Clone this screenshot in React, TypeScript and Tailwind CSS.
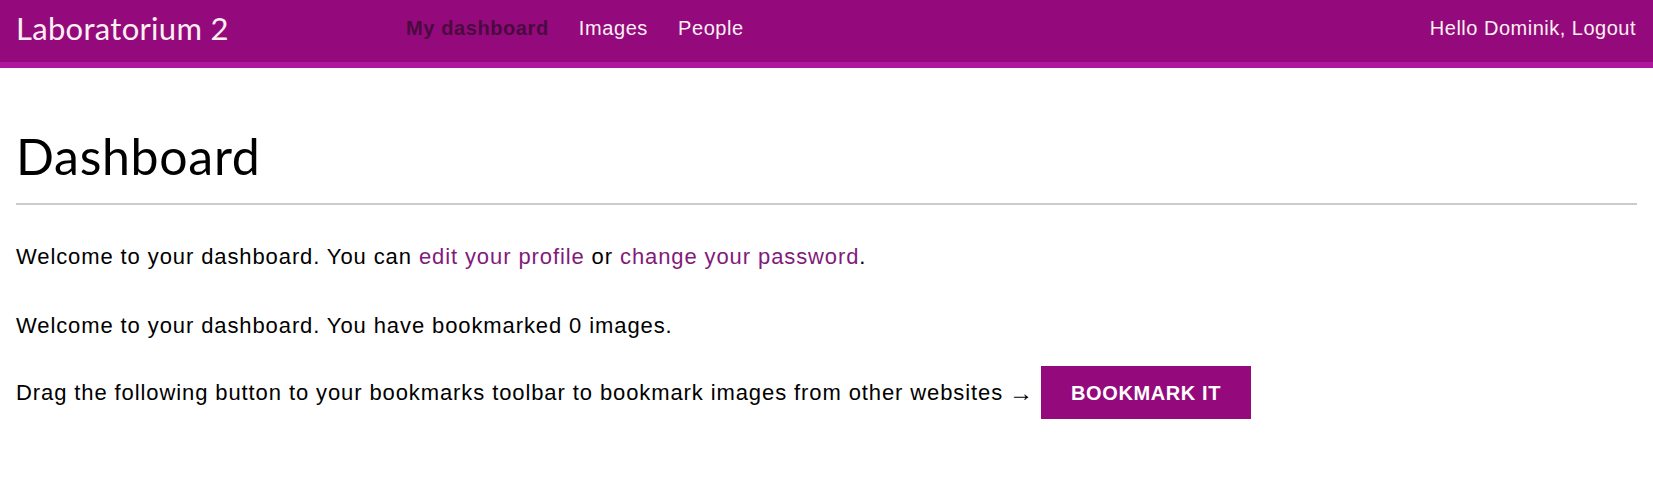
import React from 'react'

// ── Header ─────────────────────────────────────────────────────────
function Header() {
  return (
    <header className="bg-[#940a7c] border-b-[6px] border-[#b0169e] h-[68px] flex items-center px-4">
      <div className="w-[390px] text-[31px] text-[#fdf0f0] font-['Lato',sans-serif] tracking-[0.3px] -mt-[6px]">
        Laboratorium 2
      </div>
      <nav className="flex items-center gap-[30px] font-['Liberation_Sans',Arial,sans-serif] text-[20px] tracking-[0.6px] -mt-[6px]">
        <a className="font-bold text-[#4a0a40]">My dashboard</a>
        <a className="text-[#fdf0f5]">Images</a>
        <a className="text-[#fdf0f5]">People</a>
      </nav>
      <div className="ml-auto text-[20px] tracking-[0.5px] text-[#fdf0f0] font-['Liberation_Sans',Arial,sans-serif] -mt-[6px] pr-[1px]">
        Hello Dominik, <a>Logout</a>
      </div>
    </header>
  )
}

export default function App() {
  return (
    <div className="bg-white min-h-[487px]">
      <Header />
      <main className="px-4 pt-[58px] font-['Liberation_Sans',Arial,sans-serif] text-[22px] tracking-[0.9px] text-black">
        <h1 className="font-['Lato',sans-serif] text-[50px] tracking-[0.7px] leading-[60px] font-normal pb-[17px] border-b-2 border-[#cccccc]">
          Dashboard
        </h1>
        <p className="mt-[35px]">
          Welcome to your dashboard. You can <a className="text-[#821a7c]">edit your profile</a> or{' '}
          <a className="text-[#821a7c]">change your password</a>.
        </p>
        <p className="mt-[36px]">Welcome to your dashboard. You have bookmarked 0 images.</p>
        <p className="mt-[24px] flex items-center">
          Drag the following button to your bookmarks toolbar to bookmark images from other websites{' '}
          <span className="ml-[6px] text-[24px]">→</span>
          <a className="ml-[7px] bg-[#940a7c] text-white font-bold w-[210px] h-[53px] flex items-center justify-center text-[20px] tracking-[0.6px]">
            BOOKMARK IT
          </a>
        </p>
      </main>
    </div>
  )
}
